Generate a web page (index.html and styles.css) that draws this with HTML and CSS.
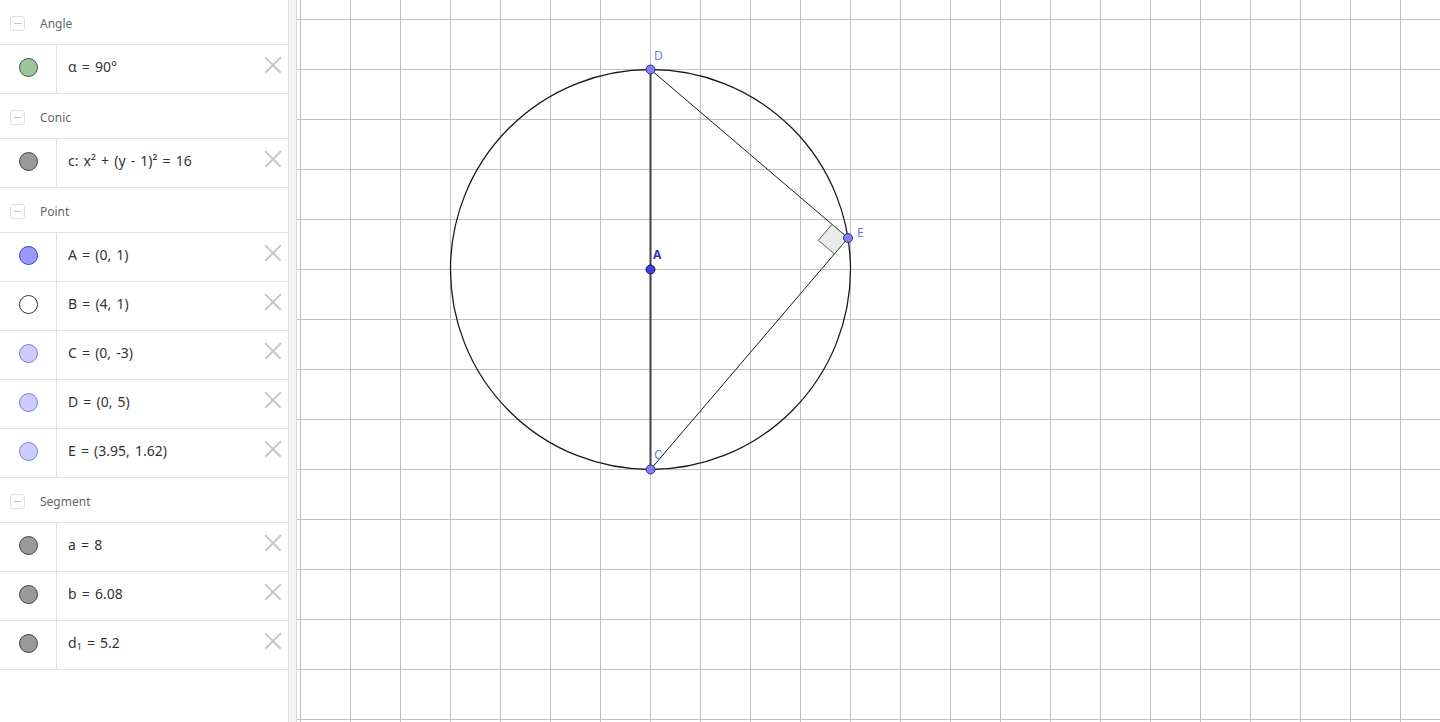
FILE: index.html
```html
<!DOCTYPE html>
<html>
<head>
<meta charset="utf-8">
<link rel="stylesheet" href="styles.css">
</head>
<body>
<div class="app">
  <aside class="panel">
    <div class="group-head"><span class="toggle"></span><span class="group-title">Angle</span></div>
    <div class="item"><div class="marker-cell"><span class="marker m-angle"></span></div><div class="expr">α = 90°</div><span class="close"></span></div>

    <div class="group-head"><span class="toggle"></span><span class="group-title">Conic</span></div>
    <div class="item"><div class="marker-cell"><span class="marker m-gray"></span></div><div class="expr">c: x² + (y - 1)² = 16</div><span class="close"></span></div>

    <div class="group-head"><span class="toggle"></span><span class="group-title">Point</span></div>
    <div class="item"><div class="marker-cell"><span class="marker m-free"></span></div><div class="expr">A = (0, 1)</div><span class="close"></span></div>
    <div class="item"><div class="marker-cell"><span class="marker m-hidden"></span></div><div class="expr">B = (4, 1)</div><span class="close"></span></div>
    <div class="item"><div class="marker-cell"><span class="marker m-dep"></span></div><div class="expr">C = (0, -3)</div><span class="close"></span></div>
    <div class="item"><div class="marker-cell"><span class="marker m-dep"></span></div><div class="expr">D = (0, 5)</div><span class="close"></span></div>
    <div class="item"><div class="marker-cell"><span class="marker m-dep"></span></div><div class="expr">E = (3.95, 1.62)</div><span class="close"></span></div>

    <div class="group-head"><span class="toggle"></span><span class="group-title">Segment</span></div>
    <div class="item"><div class="marker-cell"><span class="marker m-gray"></span></div><div class="expr">a = 8</div><span class="close"></span></div>
    <div class="item"><div class="marker-cell"><span class="marker m-gray"></span></div><div class="expr">b = 6.08</div><span class="close"></span></div>
    <div class="item"><div class="marker-cell"><span class="marker m-gray"></span></div><div class="expr">d<sub>1</sub> = 5.2</div><span class="close"></span></div>
  </aside>
  <div class="splitter"></div>
  <main class="canvas">
    <svg class="drawing" width="1143" height="722" viewBox="0 0 1143 722">
      <g transform="translate(-297 0)">
        <circle cx="650.5" cy="269.5" r="200" fill="none" stroke="#1a1a1a" stroke-width="1.3"/>
        <line x1="650.5" y1="69.5" x2="650.5" y2="469.5" stroke="#404040" stroke-width="2"/>
        <line x1="650.5" y1="69.5" x2="848" y2="238" stroke="#1a1a1a" stroke-width="1"/>
        <line x1="650.5" y1="469.5" x2="848" y2="238" stroke="#1a1a1a" stroke-width="1"/>
        <polygon points="848,238 832.0,224.4 818.4,240.3 834.4,254.0" fill="#e9ece9" stroke="#4d5f4d" stroke-width="1"/>
        <circle cx="650.5" cy="69.5" r="4.5" fill="#8080ff" stroke="#333355" stroke-width="1"/>
        <circle cx="650.5" cy="469.5" r="4.5" fill="#8080ff" stroke="#333355" stroke-width="1"/>
        <circle cx="848" cy="238" r="4.5" fill="#8080ff" stroke="#333355" stroke-width="1"/>
        <circle cx="650.5" cy="269.5" r="4.5" fill="#3f3fe6" stroke="#1a1a55" stroke-width="1"/>
        <text class="lbl" x="654" y="60">D</text>
        <text class="lbl lbl-a" x="653" y="259">A</text>
        <text class="lbl" x="857" y="237">E</text>
        <text class="lbl" x="654" y="459">C</text>
      </g>
    </svg>
  </main>
</div>
</body>
</html>
```
FILE: styles.css
```css
html, body {
  margin: 0;
  padding: 0;
  background: #fff;
}
.app {
  display: flex;
  width: 1440px;
  height: 722px;
  overflow: hidden;
  font-family: "Noto Sans", "Open Sans", sans-serif;
}
.panel {
  width: 288px;
  flex: none;
  border-right: 1px solid #dcdcdc;
  background: #fff;
  display: flex;
  flex-direction: column;
}
.group-head {
  height: 44px;
  border-bottom: 1px solid #e2e2e2;
  display: flex;
  align-items: center;
  padding-left: 10px;
  box-sizing: content-box;
}
.toggle {
  width: 13px;
  height: 13px;
  border: 1px solid #e0e0e0;
  border-radius: 3px;
  position: relative;
  margin-top: 3px;
}
.toggle::after {
  content: "";
  position: absolute;
  left: 3px;
  top: 6px;
  width: 7px;
  height: 1px;
  background: #c4c4c4;
}
.group-title {
  margin-left: 15px;
  margin-top: 2px;
  font-size: 12px;
  color: #666;
}
.item {
  height: 48px;
  border-bottom: 1px solid #e2e2e2;
  display: flex;
  align-items: center;
  position: relative;
}
.marker-cell {
  width: 56px;
  height: 100%;
  border-right: 1px solid #e2e2e2;
  display: flex;
  align-items: center;
  justify-content: center;
  flex: none;
}
.marker {
  width: 17px;
  height: 17px;
  border-radius: 50%;
  border: 1px solid #444;
  display: block;
  margin-left: 1px;
  margin-top: -3px;
}
.m-angle { background: #9bc59b; border-color: #4a4f4a; }
.m-gray { background: #999; border-color: #444; }
.m-free { background: #9999ff; border-color: #3c3cd0; }
.m-hidden { background: #fff; border-color: #333; }
.m-dep { background: #ccccff; border-color: #7c7ce0; }
.expr {
  margin-left: 11px;
  font-size: 14px;
  color: #333;
  margin-top: -6px;
  white-space: nowrap;
  word-spacing: 1.5px;
}
.expr sub {
  font-size: 9px;
  vertical-align: -2px;
  line-height: 0;
}
.close {
  position: absolute;
  right: 6px;
  top: 11px;
  width: 18px;
  height: 18px;
}
.close::before, .close::after {
  content: "";
  position: absolute;
  left: -2px;
  top: 8px;
  width: 22px;
  height: 1.6px;
  background: #c6c6c6;
  transform: rotate(45deg);
}
.close::after {
  transform: rotate(-45deg);
}
.splitter {
  width: 7px;
  flex: none;
  background: #f4f4f4;
  border-right: 1px solid #dadada;
}
.canvas {
  flex: 1;
  position: relative;
  background-color: #fff;
  background-image:
    linear-gradient(to right, #c0c0c0 1px, transparent 1px),
    linear-gradient(to bottom, #c0c0c0 1px, transparent 1px);
  background-size: 50px 50px;
  background-position: 3px 19px;
}
.drawing {
  position: absolute;
  left: 0;
  top: 0;
  display: block;
}
.lbl {
  font-family: "Noto Sans", "DejaVu Sans", sans-serif;
  font-size: 12px;
  fill: #7474f2;
}
.lbl-a {
  font-weight: bold;
  fill: #3030c8;
}
```
